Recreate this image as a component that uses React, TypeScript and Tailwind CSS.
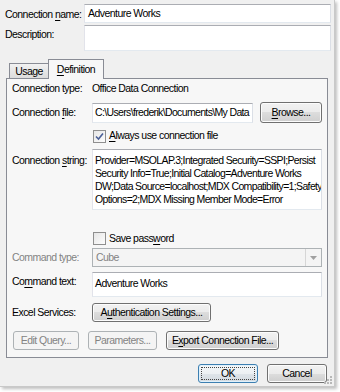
import React from 'react'

const font = { fontFamily: '"Liberation Sans", Arial, sans-serif' }

const btn =
  'h-[19px] border border-[#707070] rounded-[3px] bg-[linear-gradient(#f2f2f2_0%,#ebebeb_50%,#dddddd_50%,#cfcfcf_100%)] shadow-[inset_0_0_0_1px_#fcfcfc] text-black flex items-center justify-center whitespace-nowrap'
const btnOff =
  'h-[19px] border border-[#adb2b5] rounded-[3px] bg-[#f4f4f4] text-[#838383] flex items-center justify-center whitespace-nowrap'
const field = 'border border-[#abadb3] border-r-[#dbdfe6] border-b-[#e3e9ef] border-l-[#e2e3ea] bg-white'

function U({ children }: { children: React.ReactNode }) {
  return <span className="underline underline-offset-[2px]">{children}</span>
}

function Check({ checked }: { checked?: boolean }) {
  return (
    <div className="w-[13px] h-[13px] border border-[#8f8f8f] bg-[linear-gradient(135deg,#e6e6e6,#fdfdfd)] flex items-center justify-center shrink-0">
      {checked && (
        <svg width="9" height="9" viewBox="0 0 9 9">
          <path d="M1 4.5 L3.5 7 L8 1.5" fill="none" stroke="#4a5f97" strokeWidth="1.6" />
        </svg>
      )}
    </div>
  )
}

const connLines = [
  'Provider=MSOLAP.3;Integrated Security=SSPI;Persist',
  'Security Info=True;Initial Catalog=Adventure Works',
  'DW;Data Source=localhost;MDX Compatibility=1;Safety',
  'Options=2;MDX Missing Member Mode=Error',
]

export default function App() {
  return (
    <div
      className="w-[340px] h-[392px] bg-white overflow-hidden text-[10.5px] tracking-[-0.55px] text-black whitespace-nowrap"
      style={font}
    >
      <div className="relative w-[335px] h-[387px] bg-[#f0f0f0] border-r border-b border-[#c9c9c9] shadow-[2px_2px_3px_rgba(0,0,0,0.25)] flex flex-col">
        {/* Top fields */}
        <div className="flex items-center mt-[4px] pl-[5px] pr-[3px]">
          <span className="w-[79px] leading-[14px]">
            Connection <U>n</U>ame:
          </span>
          <div className={`${field} flex-1 h-[19px] flex items-center px-[3px]`}>Adventure Works</div>
        </div>
        <div className="flex items-start mt-[2px] pl-[5px] pr-[3px]">
          <span className="w-[79px] leading-[14px] pt-[2px]">Description:</span>
          <div className={`${field} flex-1 h-[26px]`} />
        </div>

        {/* Tabs */}
        <div className="flex items-end mt-[7px] pl-[9px] h-[20px]">
          <div className="w-[40px] h-[15px] border border-b-0 border-[#898c95] bg-[linear-gradient(#f2f2f2,#dcdcdc)] flex items-center justify-center leading-[13px]">
            Usage
          </div>
          <div className="w-[56px] h-[20px] -ml-px border border-b-0 border-[#898c95] bg-[#f7f7f7] flex items-center justify-center leading-[13px] relative z-10 mb-[-1px]">
            <span>
              <U>D</U>efinition
            </span>
          </div>
        </div>

        {/* Tab panel */}
        <div className="ml-[6px] w-[322px] border border-[#898c95] bg-[#f7f7f7] pl-[5px] pr-[4px] pb-[7px] flex flex-col">
          <div className="flex items-center mt-[3px] h-[14px]">
            <span className="w-[80px]">Connection type:</span>
            <span>Office Data Connection</span>
          </div>
          <div className="flex items-center mt-[6px]">
            <span className="w-[80px]">
              Connection <U>f</U>ile:
            </span>
            <div
              className={`${field} w-[161px] h-[20px] flex items-center pl-[2px] tracking-[-0.65px] overflow-hidden`}
            >
              C:\Users\frederik\Documents\My Data
            </div>
            <div className={`${btn} w-[62px] h-[21px] ml-[7px]`}>
              <span>
                <U>B</U>rowse...
              </span>
            </div>
          </div>
          <div className="flex items-center mt-[6px] pl-[81px] h-[14px] gap-[3px]">
            <Check checked />
            <span>
              <U>A</U>lways use connection file
            </span>
          </div>
          <div className="flex items-start mt-[6px]">
            <span className="w-[80px] pt-[4px] leading-[14px]">
              Connection <U>s</U>tring:
            </span>
            <div
              className={`${field} w-[230px] h-[61px] pl-[2px] pr-0 pt-[4px] leading-[13px] tracking-[-0.65px] overflow-hidden`}
            >
              {connLines.map((l) => (
                <div key={l}>{l}</div>
              ))}
            </div>
          </div>
          <div className="flex items-center mt-[22px] pl-[81px] h-[13px] gap-[3px]">
            <Check />
            <span>
              Save pass<U>w</U>ord
            </span>
          </div>
          <div className="flex items-center mt-[3px]">
            <span className="w-[80px] text-[#838383]">Command type:</span>
            <div className="w-[230px] h-[19px] border border-[#adb2b5] bg-[#f4f4f4] flex items-center">
              <span className="flex-1 pl-[3px] text-[#838383]">Cube</span>
              <div className="w-[16px] h-[17px] border-l border-[#d6d6d6] flex items-center justify-center">
                <svg width="7" height="4" viewBox="0 0 7 4">
                  <path d="M0 0 H7 L3.5 4 Z" fill="#a0a0a0" />
                </svg>
              </div>
            </div>
          </div>
          <div className="flex items-start mt-[5px]">
            <span className="w-[80px] pt-[2px] leading-[14px]">
              Co<U>m</U>mand text:
            </span>
            <div className={`${field} w-[230px] h-[25px] px-[2px] pt-[4px] leading-[13px]`}>Adventure Works</div>
          </div>
          <div className="flex items-center mt-[6px]">
            <span className="w-[80px]">Excel Services:</span>
            <div className={`${btn} w-[119px]`}>
              <span>
                A<U>u</U>thentication Settings...
              </span>
            </div>
          </div>
          <div className="flex items-center mt-[9px] pl-[1px] gap-[9px]">
            <div className={`${btnOff} w-[66px]`}>Edit Query...</div>
            <div className={`${btnOff} w-[69px]`}>Parameters...</div>
            <div className={`${btn} w-[113px]`}>
              <span>
                E<U>x</U>port Connection File...
              </span>
            </div>
          </div>
        </div>

        {/* Dialog buttons */}
        <div className="flex justify-end gap-[9px] mt-[6px] pr-[7px]">
          <div className="w-[60px] h-[19px] border border-[#3c7fb1] rounded-[3px] bg-[linear-gradient(#f4f7f9_0%,#ecf0f3_50%,#dfe5ea_50%,#d3dae0_100%)] shadow-[inset_0_0_0_1px_#dff0fb] flex items-center justify-center p-[2px]">
            <div className="w-full h-full border border-dotted border-[#444] flex items-center justify-center">OK</div>
          </div>
          <div className={`${btn} w-[60px]`}>Cancel</div>
        </div>

        {/* Resize grip */}
        <svg className="absolute right-[1px] bottom-[1px]" width="10" height="10" viewBox="0 0 10 10">
          <g fill="#b8b8b8">
            <rect x="7" y="1" width="2" height="2" />
            <rect x="4" y="4" width="2" height="2" />
            <rect x="7" y="4" width="2" height="2" />
            <rect x="1" y="7" width="2" height="2" />
            <rect x="4" y="7" width="2" height="2" />
            <rect x="7" y="7" width="2" height="2" />
          </g>
        </svg>
      </div>
    </div>
  )
}
